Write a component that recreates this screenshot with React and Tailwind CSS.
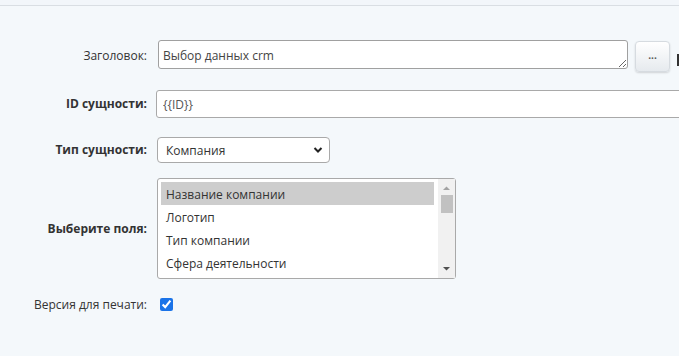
import React from 'react'

const font = { fontFamily: '"Open Sans", "Noto Sans", sans-serif' }

const Label = ({children, bold}) => (
  <div className={'w-[147px] shrink-0 text-right text-[12px] text-[#333] ' + (bold ? 'font-bold' : '')}>
    {children}
  </div>
)

const fields = ['Название компании', 'Логотип', 'Тип компании', 'Сфера деятельности']

const ListBox = () => (
  <div className="flex h-[101px] w-[299px] shrink-0 rounded-[3px] border border-[#a9a9a9] bg-white">
    <div className="flex-1 pl-[3px] pr-[4px] pt-[3px]">
      {fields.map((f, i) => (
        <div key={f} className={'h-[23px] pl-[5px] pt-[2px] text-[12px] leading-[22px] text-[#333] ' + (i === 0 ? 'bg-[#cdcdcd]' : '')}>
          {f}
        </div>
      ))}
    </div>
    <div className="flex w-[17px] flex-col items-center bg-[#f1f1f1]">
      <svg width="9" height="9" viewBox="0 0 9 9" className="mt-[5px]"><path d="M1 6 L4.5 2.5 L8 6 Z" fill="#a3a3a3"/></svg>
      <div className="mt-[2px] h-[18px] w-[12px] bg-[#c1c1c1]"></div>
      <div className="flex-1"></div>
      <svg width="9" height="9" viewBox="0 0 9 9" className="mb-[5px]"><path d="M1 3 L4.5 6.5 L8 3 Z" fill="#505050"/></svg>
    </div>
  </div>
)

const App = () => {
  return (
    <div style={font} className="h-[356px] w-[679px] overflow-hidden bg-[#f4f8fb]">
      <div className="h-[5px] bg-[#f2f6fa]"></div>
      <div className="h-px bg-[#d9dee3]"></div>

      <div className="mt-[34px] flex h-[32px] items-start gap-[11px]">
        <div className="flex h-[31px] items-center"><Label>Заголовок:</Label></div>
        <textarea
          readOnly
          defaultValue="Выбор данных crm"
          className="h-[29px] w-[470px] shrink-0 resize-y rounded-[3px] border border-[#a0a0a0] bg-white px-[4px] pt-[7px] pb-[3px] text-[12px] leading-[16px] text-[#444] outline-none"
        />
        <button className="mt-[1px] ml-[-4px] flex h-[31px] w-[35px] shrink-0 items-center justify-center rounded-[4px] border border-[#d6dbe0] bg-gradient-to-b from-white to-[#e6eaee] pb-[4px] text-[10px] font-bold leading-none text-[#555] shadow-[0_1px_2px_rgba(0,0,0,0.15)]">
          ...
        </button>
        <div className="mt-[14px] ml-[-4px] h-[12px] w-[10px] shrink-0 border-2 border-[#333] bg-white"></div>
      </div>

      <div className="mt-[18px] flex h-[28px] items-center gap-[9px]">
        <Label bold>ID сущности:</Label>
        <input
          readOnly
          defaultValue="{{ID}}"
          className="h-[28px] w-[560px] shrink-0 rounded-[3px] border border-[#a9a9a9] bg-white px-[6px] pt-[1px] text-[12px] text-[#555] outline-none"
        />
      </div>

      <div className="mt-[19px] flex h-[26px] items-center gap-[10px]">
        <Label bold>Тип сущности:</Label>
        <div className="flex h-[26px] w-[173px] items-center justify-between rounded-[4px] border border-[#a9a9a9] bg-white pl-[8px] pr-[6px] pt-[2px] text-[12px] text-[#333]">
          <span>Компания</span>
          <svg width="10" height="8" viewBox="0 0 10 8" className="mb-[2px]"><path d="M1.5 2 L5 5.5 L8.5 2" stroke="#222" strokeWidth="2" fill="none"/></svg>
        </div>
      </div>

      <div className="mt-[15px] flex h-[101px] items-center gap-[10px]">
        <Label bold>Выберите поля:</Label>
        <ListBox />
      </div>

      <div className="mt-[19px] flex h-[13px] items-center gap-[13px]">
        <Label>Версия для печати:</Label>
        <input type="checkbox" defaultChecked className="m-0 h-[13px] w-[13px] accent-[#1a73e8]" />
      </div>
    </div>
  )
}

export default App
